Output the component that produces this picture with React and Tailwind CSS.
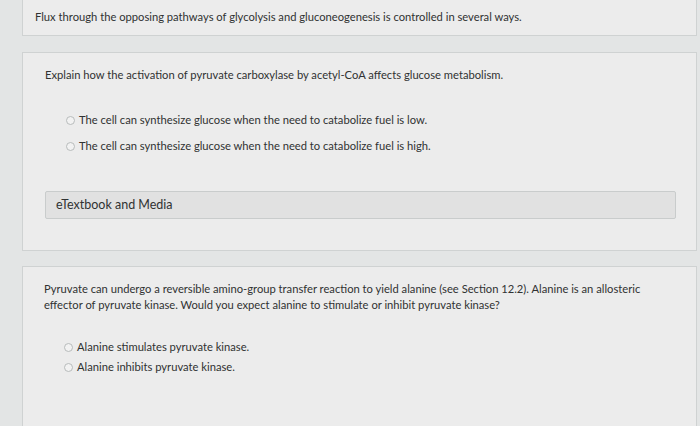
import React from "react";

function Radio() {
  return (
    <span className="inline-block w-[9px] h-[9px] rounded-full border border-[#b8bcbc] bg-[#f2f2f2] shrink-0" />
  );
}

function Option({ children }) {
  return (
    <div className="flex items-center gap-[4px]">
      <Radio />
      <span>{children}</span>
    </div>
  );
}

export default function App() {
  return (
    <div
      className="w-[700px] h-[426px] overflow-hidden bg-[#e3e5e5] text-[#303232] pl-[22px] pr-[3px] text-[11.2px] leading-[16px]"
      style={{ fontFamily: "Lato, 'Open Sans', sans-serif" }}
    >
      <div className="bg-[#ececec] border border-t-0 border-[#cfd2d2] h-[36px] pl-[12px] pt-[9px]">
        Flux through the opposing pathways of glycolysis and gluconeogenesis is controlled in several ways.
      </div>

      <div className="mt-[16px] bg-[#ececec] border border-[#cfd2d2] h-[199px] pl-[22px] pr-[20px] pt-[14px]">
        <div>Explain how the activation of pyruvate carboxylase by acetyl-CoA affects glucose metabolism.</div>
        <div className="mt-[29px] pl-[21px] flex flex-col gap-[10px]">
          <Option>The cell can synthesize glucose when the need to catabolize fuel is low.</Option>
          <Option>The cell can synthesize glucose when the need to catabolize fuel is high.</Option>
        </div>
        <div className="mt-[37px] h-[28px] bg-[#e1e1e1] border border-[#c9cccc] rounded-[2px] pl-[10px] flex items-center text-[12.5px]">
          eTextbook and Media
        </div>
      </div>

      <div className="mt-[15px] bg-[#ececec] border border-b-0 border-[#cfd2d2] h-[200px] pl-[21px] pr-[20px] pt-[14px]">
        <div className="leading-[16px] max-w-[615px]">
          Pyruvate can undergo a reversible amino-group transfer reaction to yield alanine (see Section 12.2). Alanine is an allosteric effector of pyruvate kinase. Would you expect alanine to stimulate or inhibit pyruvate kinase?
        </div>
        <div className="mt-[26px] pl-[20px] flex flex-col gap-[4px]">
          <Option>Alanine stimulates pyruvate kinase.</Option>
          <Option>Alanine inhibits pyruvate kinase.</Option>
        </div>
      </div>
    </div>
  );
}
